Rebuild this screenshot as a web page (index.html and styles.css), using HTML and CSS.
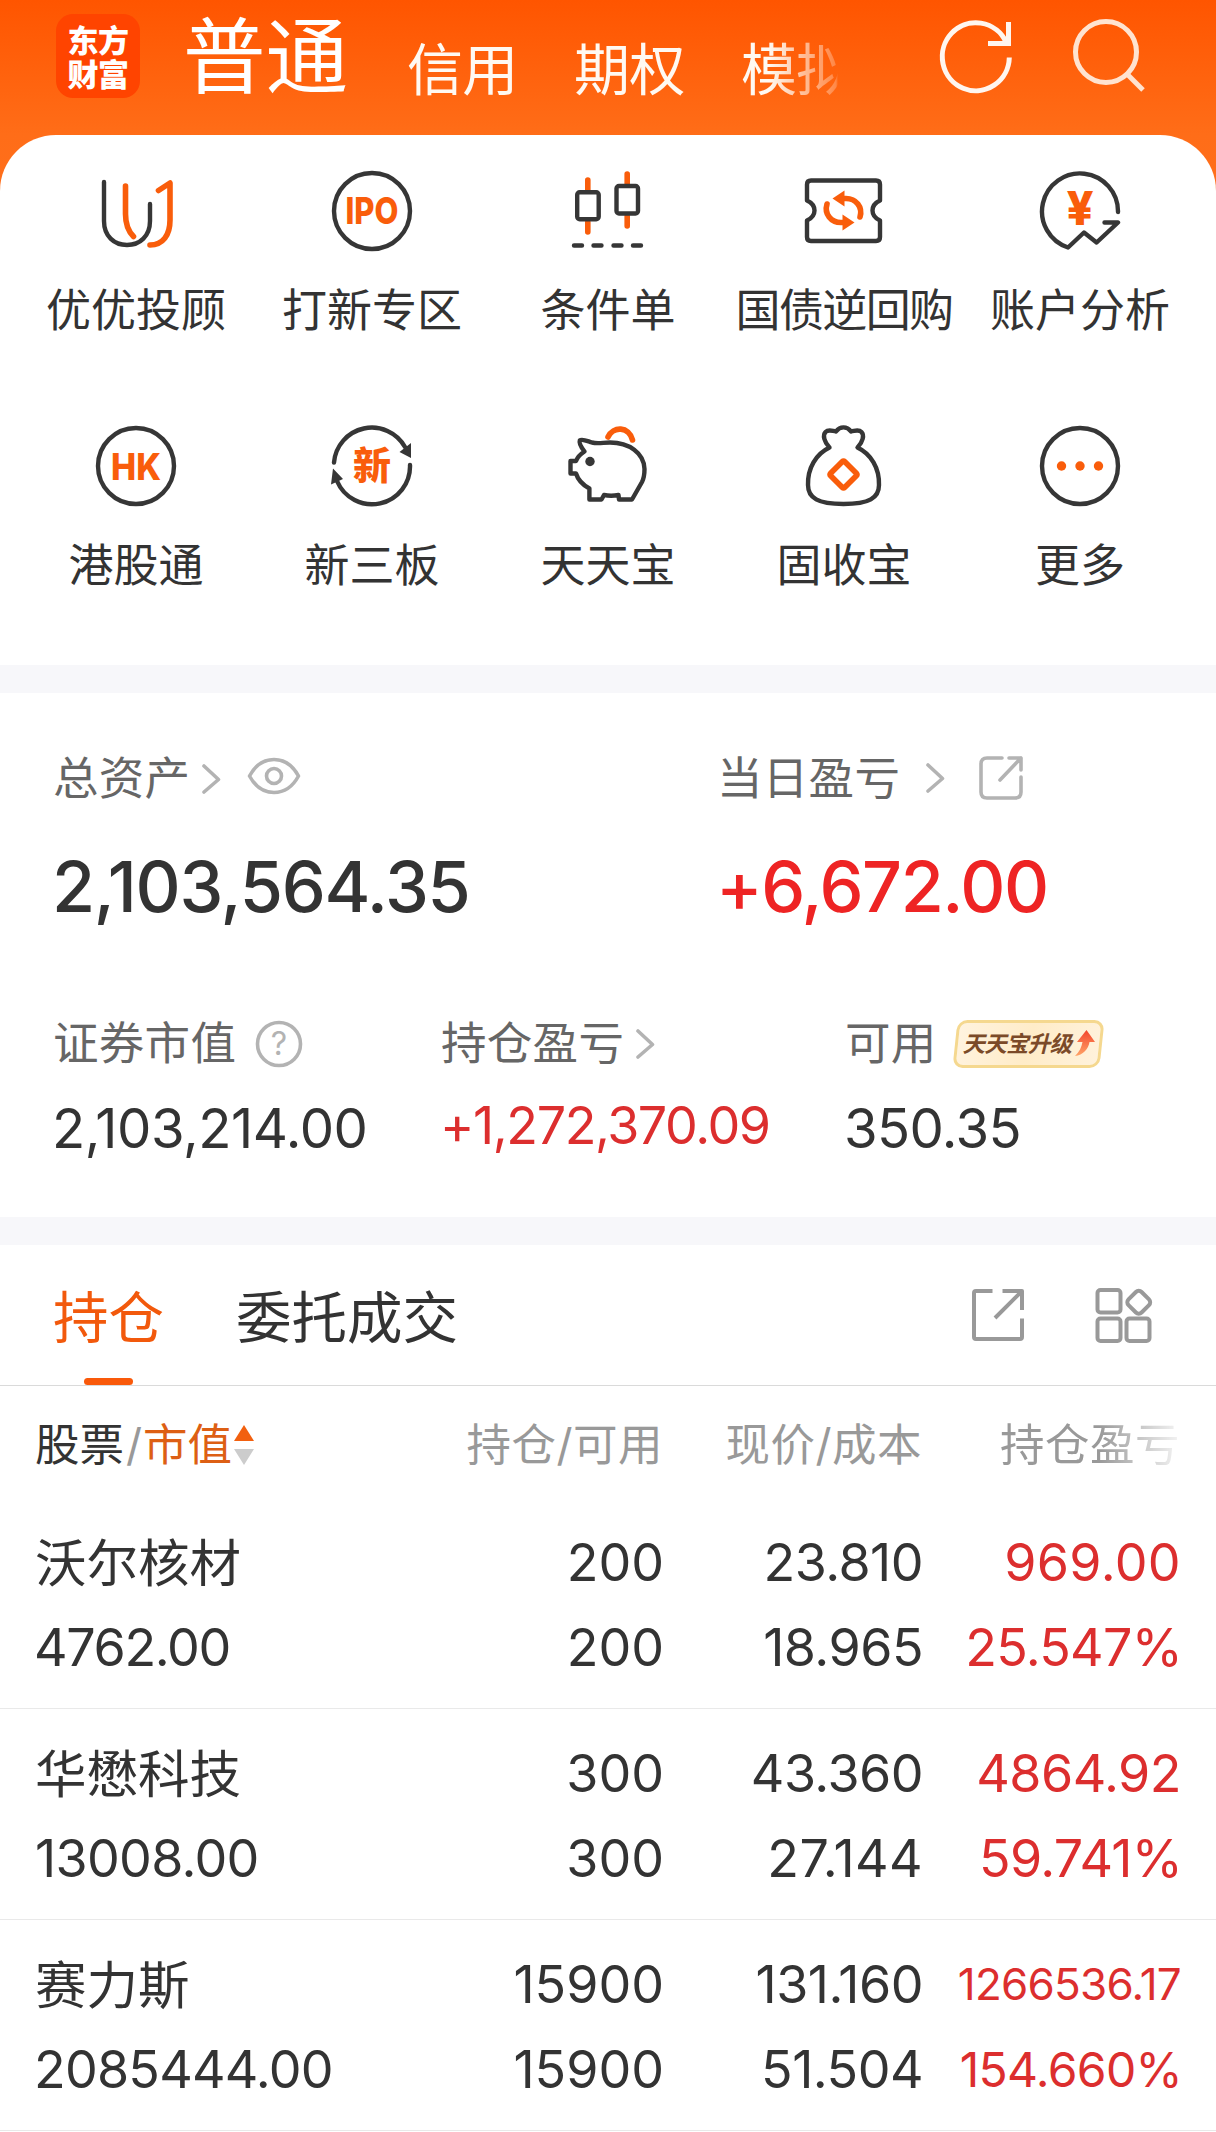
FILE: index.html
```html
<!DOCTYPE html>
<html lang="zh-CN">
<head>
<meta charset="utf-8">
<title>东方财富</title>
<link rel="stylesheet" href="styles.css">
</head>
<body>
<header class="hero">
  <div class="topbar">
    <div class="logo"><span>东方</span><span>财富</span></div>
    <nav class="modes">
      <a class="mode mode-on">普通</a>
      <a class="mode">信用</a>
      <a class="mode">期权</a>
      <a class="mode mode-cut">模拟</a>
    </nav>
    <svg class="refresh" width="76" height="76" viewBox="0 0 76 76" fill="none" stroke="#fff6ef" stroke-width="5"><path d="M71.300 39.500A33.500 34 0 1 1 68 24"/><path d="M70.500 4V25.500M50 25.500H73"/></svg>
    <svg class="search" width="76" height="76" viewBox="0 0 76 76" fill="none" stroke="#ffe3d0" stroke-width="5"><circle cx="35" cy="35" r="30.500"/><path d="M56 57L72 73"/></svg>
  </div>
  <section class="menu">
    <a class="item">
      <svg class="icon" viewBox="0 0 82 82"><path class="dk" d="M9 12V51C9 66 19 75 32 75S55 66 55 51V34"/><path class="or" d="M30.500 16V44C30.500 54 33 61 38.500 66.500M63.500 20.500L75 13V50C75 65 68 75 55 75"/></svg>
      <span>优优投顾</span>
    </a>
    <a class="item">
      <svg class="icon" viewBox="0 0 82 82"><circle class="dk" cx="41" cy="41" r="38"/><text class="word" x="14.500" y="54" textLength="53" lengthAdjust="spacingAndGlyphs">IPO</text></svg>
      <span>打新专区</span>
    </a>
    <a class="item">
      <svg class="icon" viewBox="0 0 82 82"><path class="or" d="M20.800 10V20M20.800 52V62M60.200 4V14M60.200 46V56"/><rect class="dk" x="10.200" y="22.200" width="21.500" height="27" rx="2.500"/><rect class="dk" x="49.500" y="16" width="21.500" height="27.500" rx="2.500"/><path class="dk" d="M7 75.500H15M26.500 75.500H34.500M46.500 75.500H54.500M66 75.500H74"/></svg>
      <span>条件单</span>
    </a>
    <a class="item">
      <svg class="icon" viewBox="0 0 82 82"><path class="dk" d="M8 10.500H73Q77 10.500 77 14.500V30.500Q69.500 34 69.500 40.500T77 50.500V67Q77 71 73 71H8Q4 71 4 67V50.500Q11.500 47 11.500 40.500T4 30.500V14.500Q4 10.500 8 10.500Z"/><g id="turn"><path class="or" d="M39 28.500H43C53 28.500 60 37 57 47"/><path class="orf" d="M29.500 28.500L41.500 20.500V36.500Z"/></g><use href="#turn" transform="rotate(180 40.500 40.500)"/></svg>
      <span class="tight">国债逆回购</span>
    </a>
    <a class="item">
      <svg class="icon" viewBox="0 0 82 82"><path class="dk" d="M79 42A38 38 0 1 0 29 77.500L45 62.500 57.600 72.500 79 52.500H65.500"/><text class="yen" x="41" y="55" text-anchor="middle">¥</text></svg>
      <span>账户分析</span>
    </a>
    <a class="item">
      <svg class="icon" viewBox="0 0 82 82"><circle class="dk" cx="41" cy="41" r="38"/><text class="word" x="16" y="54.500" textLength="50" lengthAdjust="spacingAndGlyphs">HK</text></svg>
      <span>港股通</span>
    </a>
    <a class="item">
      <svg class="icon" viewBox="0 0 82 82"><path class="dk" d="M3 37.500A38 38 0 0 1 74 22M79 40A38 38 0 0 1 6 56"/><path class="dkf" d="M68.500 27L80 18V33ZM2 43.500L0 59.500L12 54Z"/><text class="xin" x="41" y="54" text-anchor="middle">新</text></svg>
      <span>新三板</span>
    </a>
    <a class="item">
      <svg class="icon" viewBox="0 0 82 82"><path class="dk" d="M17.500 26.500C14 22 12 17.500 12.800 15.500C15 13.500 20 16 25 17.500C31 19 36 17.500 43 17.500C62 17.500 77 28 77.500 44C77.500 50 76.500 54 75 57L65 74.500H52L51.500 70C46 71 42 71 37 70L34.500 74.500H22.400V63.500C16 60 11 55 9 48.500H3.500V36H9C10.500 32 13.500 29 17.500 26.500Z"/><circle class="dkf" cx="23" cy="36.500" r="4.700"/><path class="or" d="M41 12C46 1 62 1 65.500 15"/></svg>
      <span>天天宝</span>
    </a>
    <a class="item">
      <svg class="icon" viewBox="0 0 82 82"><path class="dk" d="M26.500 22.500C21 17 19.500 10 22.500 7C25.500 4 29 6 33 6.500C37 1 44 1 48 6.500C52 6 55.500 4 58.500 7C61.500 10 60 17 54.500 22.500C68 29 76.500 43 76 60C76 73 66 79 40.500 79S5 73 5 60C4.500 43 13 29 26.500 22.500Z"/><rect class="or" x="30.500" y="39.500" width="20" height="20" rx="1.500" transform="rotate(45 40.500 49.500)"/></svg>
      <span>固收宝</span>
    </a>
    <a class="item">
      <svg class="icon" viewBox="0 0 82 82"><circle class="dk" cx="41" cy="41" r="38"/><g class="orf"><circle cx="22.500" cy="41" r="4.700"/><circle cx="41" cy="41" r="4.700"/><circle cx="59.500" cy="41" r="4.700"/></g></svg>
      <span>更多</span>
    </a>
  </section>
</header>

<section class="assets">
  <div class="pair">
    <div class="cell">
      <div class="label">总资产<svg class="chev chev-a" width="20" height="30" viewBox="0 0 20 30"><path d="M3 2L17.500 15.500 3 28"/></svg><svg class="eye" width="54" height="38" viewBox="0 0 54 38"><path d="M2.500 19C9 7 17 2.500 27 2.500S45 7 51.500 19C45 31 37 35.500 27 35.500S9 31 2.500 19Z"/><circle cx="27" cy="19" r="7.500"/></svg></div>
      <div class="big">2,103,564.35</div>
    </div>
    <div class="cell">
      <div class="label">当日盈亏<svg class="chev chev-b" width="20" height="30" viewBox="0 0 20 30"><path d="M3 2L17.500 15.500 3 28"/></svg><svg class="share-s" width="46" height="46" viewBox="0 0 46 46"><path d="M24 3H9Q3 3 3 9V37Q3 43 9 43H37Q43 43 43 37V22M31 3H43V15M43 3L22 25"/></svg></div>
      <div class="big up">+6,672.00</div>
    </div>
  </div>
  <div class="trio">
    <div class="cell">
      <div class="label">证券市值<svg class="help" width="48" height="48" viewBox="0 0 48 48"><circle cx="24" cy="24" r="21.500"/><text x="24" y="35" text-anchor="middle">?</text></svg></div>
      <div class="mid">2,103,214.00</div>
    </div>
    <div class="cell">
      <div class="label">持仓盈亏<svg class="chev chev-c" width="20" height="30" viewBox="0 0 20 30"><path d="M3 2L17.500 15.500 3 28"/></svg></div>
      <div class="mid gain">+1,272,370.09</div>
    </div>
    <div class="cell">
      <div class="label">可用<span class="badge"><b>天天宝升级</b><svg width="22" height="27" viewBox="0 0 22 27"><defs><linearGradient id="rise" x1="0" y1="0" x2="0" y2="1"><stop offset="0" stop-color="#f2452c"/><stop offset="1" stop-color="#ffa468"/></linearGradient></defs><path fill="url(#rise)" d="M12.500 0L21 12H15.500C14.500 19 9 25 1 26C5.500 22 7.500 17 8.500 12H3Z"/></svg></span></div>
      <div class="mid free">350.35</div>
    </div>
  </div>
</section>

<nav class="tabs">
  <a class="tab tab-on">持仓</a>
  <a class="tab">委托成交</a>
  <svg class="share-l" width="56" height="56" viewBox="0 0 56 56"><path d="M22.500 4H6Q4 4 4 6V50Q4 52 6 52H50Q52 52 52 50V31.500M32.500 4H52V23M52 4L25 31"/></svg>
  <svg class="apps" width="60" height="56" viewBox="0 0 60 56"><rect x="3.500" y="3" width="23" height="22.500" rx="3"/><rect x="3.500" y="31.500" width="23" height="22.500" rx="3"/><rect x="32.500" y="31.500" width="23" height="22.500" rx="3"/><rect x="35.500" y="6" width="18.500" height="18.500" rx="4" transform="rotate(45 44.750 15.250)"/></svg>
</nav>

<section class="holdings">
  <div class="row head">
    <div class="sort"><span class="ink">股票</span><span class="cut">/</span><span class="hot">市值</span><svg width="20" height="42" viewBox="0 0 20 42"><path fill="#f2600f" d="M10 1L20 17H0Z"/><path fill="#ccc" d="M0 25H20L10 41Z"/></svg></div>
    <div>持仓/可用</div>
    <div>现价/成本</div>
    <div><span class="fade">持仓盈亏</span></div>
  </div>
  <div class="row">
    <div><p class="name">沃尔核材</p><p class="snug">4762.00</p></div>
    <div class="qty"><p>200</p><p>200</p></div>
    <div><p>23.810</p><p>18.965</p></div>
    <div class="gain"><p class="open">969.00</p><p class="pct">25.547%</p></div>
  </div>
  <div class="row">
    <div><p class="name">华懋科技</p><p class="lead">13008.00</p></div>
    <div class="qty"><p>300</p><p>300</p></div>
    <div><p>43.360</p><p class="open">27.144</p></div>
    <div class="gain"><p>4864.92</p><p class="pct">59.741%</p></div>
  </div>
  <div class="row">
    <div><p class="name">赛力斯</p><p class="long">2085444.00</p></div>
    <div class="qty"><p>15900</p><p>15900</p></div>
    <div><p>131.160</p><p>51.504</p></div>
    <div class="gain"><p class="small">1266536.17</p><p class="pct less">154.660%</p></div>
  </div>
</section>
</body>
</html>
```
FILE: styles.css
```css
* { box-sizing: border-box; margin: 0; padding: 0; }
body {
  width: 1216px;
  height: 2132px;
  overflow: hidden;
  background: #fff;
  color: #333;
  font-family: Inter, "Noto Sans CJK SC", sans-serif;
  white-space: nowrap;
}
svg { display: block; flex: none; }

/* top bar */
.hero { height: 693px; background: linear-gradient(#ff5500, #ff6d18 135px, #ff6f1c 200px, #f7f7fa 200px); }
.topbar { display: flex; height: 135px; padding-left: 56px; align-items: flex-start; }
.logo {
  width: 84px; height: 84px; margin-top: 14px; padding-top: 10px;
  border-radius: 17px; background: #ff4400; color: #fff;
  font-size: 31px; font-weight: 900; line-height: 33px; text-align: center;
}
.logo span { display: block; height: 34px; letter-spacing: -0.5px; }
.modes { display: flex; width: 655px; margin-left: 43px; color: #fff9f2; }
.mode { flex: none; width: 112px; font-size: 56px; line-height: 140px; height: 135px; margin-right: 55px; letter-spacing: -0.8px; }
.mode-on { width: 166px; font-size: 82.5px; line-height: 115px; margin-right: 58px; color: #fff; letter-spacing: 0; }
.mode-cut {
  margin-right: 0;
  -webkit-mask-image: linear-gradient(90deg, #000 28px, rgba(0,0,0,.25) 95px, transparent 97px);
  mask-image: linear-gradient(90deg, #000 28px, rgba(0,0,0,.25) 95px, transparent 97px);
}
.refresh { margin: 18px 0 0 100px; }
.search { margin: 17px 0 0 57px; }

/* shortcut menu */
.menu {
  display: grid; grid-template-columns: repeat(5, 236px); grid-auto-rows: 255px;
  height: 530px; padding: 35px 18px 0; background: #fff; border-radius: 56px 56px 0 0;
}
.item { display: flex; flex-direction: column; align-items: center; gap: 29px; font-size: 45px; line-height: 60px; }
.tight { letter-spacing: -1.6px; }
.icon { width: 82px; height: 82px; }
.dk, .or { fill: none; stroke: #363636; stroke-width: 4.4; stroke-linecap: round; stroke-linejoin: round; }
.or { stroke: #f95d0b; stroke-width: 5.6; }
.dkf { fill: #363636; }
.orf { fill: #f95d0b; }
.word, .yen, .xin { fill: #f95d0b; font-weight: 800; font-size: 37px; }
.yen { font-size: 47px; }
.xin { font-size: 38px; font-weight: 900; }

/* assets */
.assets { height: 524px; padding: 56px 0 0 52px; }
.pair { display: grid; grid-template-columns: 664px 1fr; }
.trio { display: grid; grid-template-columns: 388px 404px 1fr; margin-top: 82px; }
.label { display: flex; align-items: center; height: 60px; padding-left: 1px; font-size: 45.5px; line-height: 60px; letter-spacing: 0.3px; color: #666; }
.big { margin-top: 33px; font-size: 70px; line-height: 90px; font-weight: 500; letter-spacing: -0.018em; }
.up { color: #ee2424; letter-spacing: -0.021em; }
.mid { margin-top: 19px; font-size: 54.5px; line-height: 70px; letter-spacing: -0.008em; }
.mid.gain { font-size: 52px; line-height: 66px; letter-spacing: -0.027em; }
.mid.free { letter-spacing: -0.012em; }
.gain { color: #dc2e2e; }
.chev, .eye, .share-s, .help circle { fill: none; stroke: #b3b3b3; stroke-width: 3.6; stroke-linecap: round; stroke-linejoin: round; }
.chev-a { margin: -1px 0 0 11px; }
.eye { margin: -6px 0 0 26px; }
.chev-b { margin: -2px 0 0 25px; }
.share-s { margin: -2px 0 0 33px; }
.help { margin-left: 19px; }
.help text { fill: #b3b3b3; font-size: 32px; font-weight: 400; }
.chev-c { margin-left: 11px; }
.badge {
  position: relative; display: flex; align-items: center; width: 151px; height: 48px;
  margin: -1px 0 0 16px; padding-left: 10px; color: #7b4a28;
}
.badge::before {
  content: ""; position: absolute; inset: 0 2px; transform: skewX(-6deg);
  border: 3px solid #f5d88f; border-radius: 10px;
  background: linear-gradient(100deg, #fff3df, #ffecc8 50%, #fff2dc);
}
.badge b { position: relative; font-size: 22.5px; line-height: 46px; font-weight: 700; font-style: italic; letter-spacing: -0.8px; }
.badge svg { position: relative; margin-left: 3px; }

/* tabs */
.tabs {
  display: flex; height: 169px; padding: 43px 0 0 53px;
  border-top: 28px solid #f7f7fa; border-bottom: 1px solid #dadada; font-size: 55.5px; line-height: 60px;
}
.tab { margin-right: 72px; }
.tab-on { color: #f2590c; }
.tab-on::after { content: ""; display: block; width: 49px; height: 7px; margin: 30px auto 0; border-radius: 4px; background: #f9590a; }
.share-l, .apps { fill: none; stroke: #999; stroke-width: 4; stroke-linejoin: round; stroke-linecap: butt; }
.share-l { margin: -1px 0 0 440px; }
.apps { margin: -1px 0 0 68px; }

/* holdings */
.row {
  display: grid; grid-template-columns: 1fr 259px 259px 258px; height: 211px;
  padding: 22px 35px 0 34px; border-bottom: 1px solid #e9e9e9;
  font-size: 52px; line-height: 85px; letter-spacing: -0.01em; text-align: right;
}
.row > :first-child { text-align: left; }
.row.head { height: 112px; padding-top: 29px; border: 0; font-size: 44.5px; line-height: 60px; letter-spacing: 0.5px; color: #999; }
.head > div { padding-right: 1px; }
.head .sort { display: flex; align-items: center; height: 60px; padding-left: 1px; letter-spacing: 0; }
.sort svg { margin-left: 2px; }
.cut { margin: 0 1px 0 2px; }
.ink { color: #333; }
.hot { color: #dd5f14; }
.fade {
  -webkit-mask-image: linear-gradient(90deg, #000 55%, rgba(0,0,0,.1) 100%);
  mask-image: linear-gradient(90deg, #000 55%, rgba(0,0,0,.1) 100%);
}
.row p { height: 85px; }
.qty p { letter-spacing: 0; }
.row .name { padding-left: 1px; font-size: 51.5px; line-height: 87px; letter-spacing: 0; }
.row .snug { letter-spacing: -0.026em; }
.row .lead { padding-left: 1px; letter-spacing: -0.013em; }
.row .long { letter-spacing: -0.015em; }
.row .open { letter-spacing: 0.007em; }
.row .pct { margin-right: -1px; letter-spacing: -0.014em; }
.row .small { font-size: 44px; letter-spacing: -0.017em; }
.row .less { font-size: 48px; }
```
